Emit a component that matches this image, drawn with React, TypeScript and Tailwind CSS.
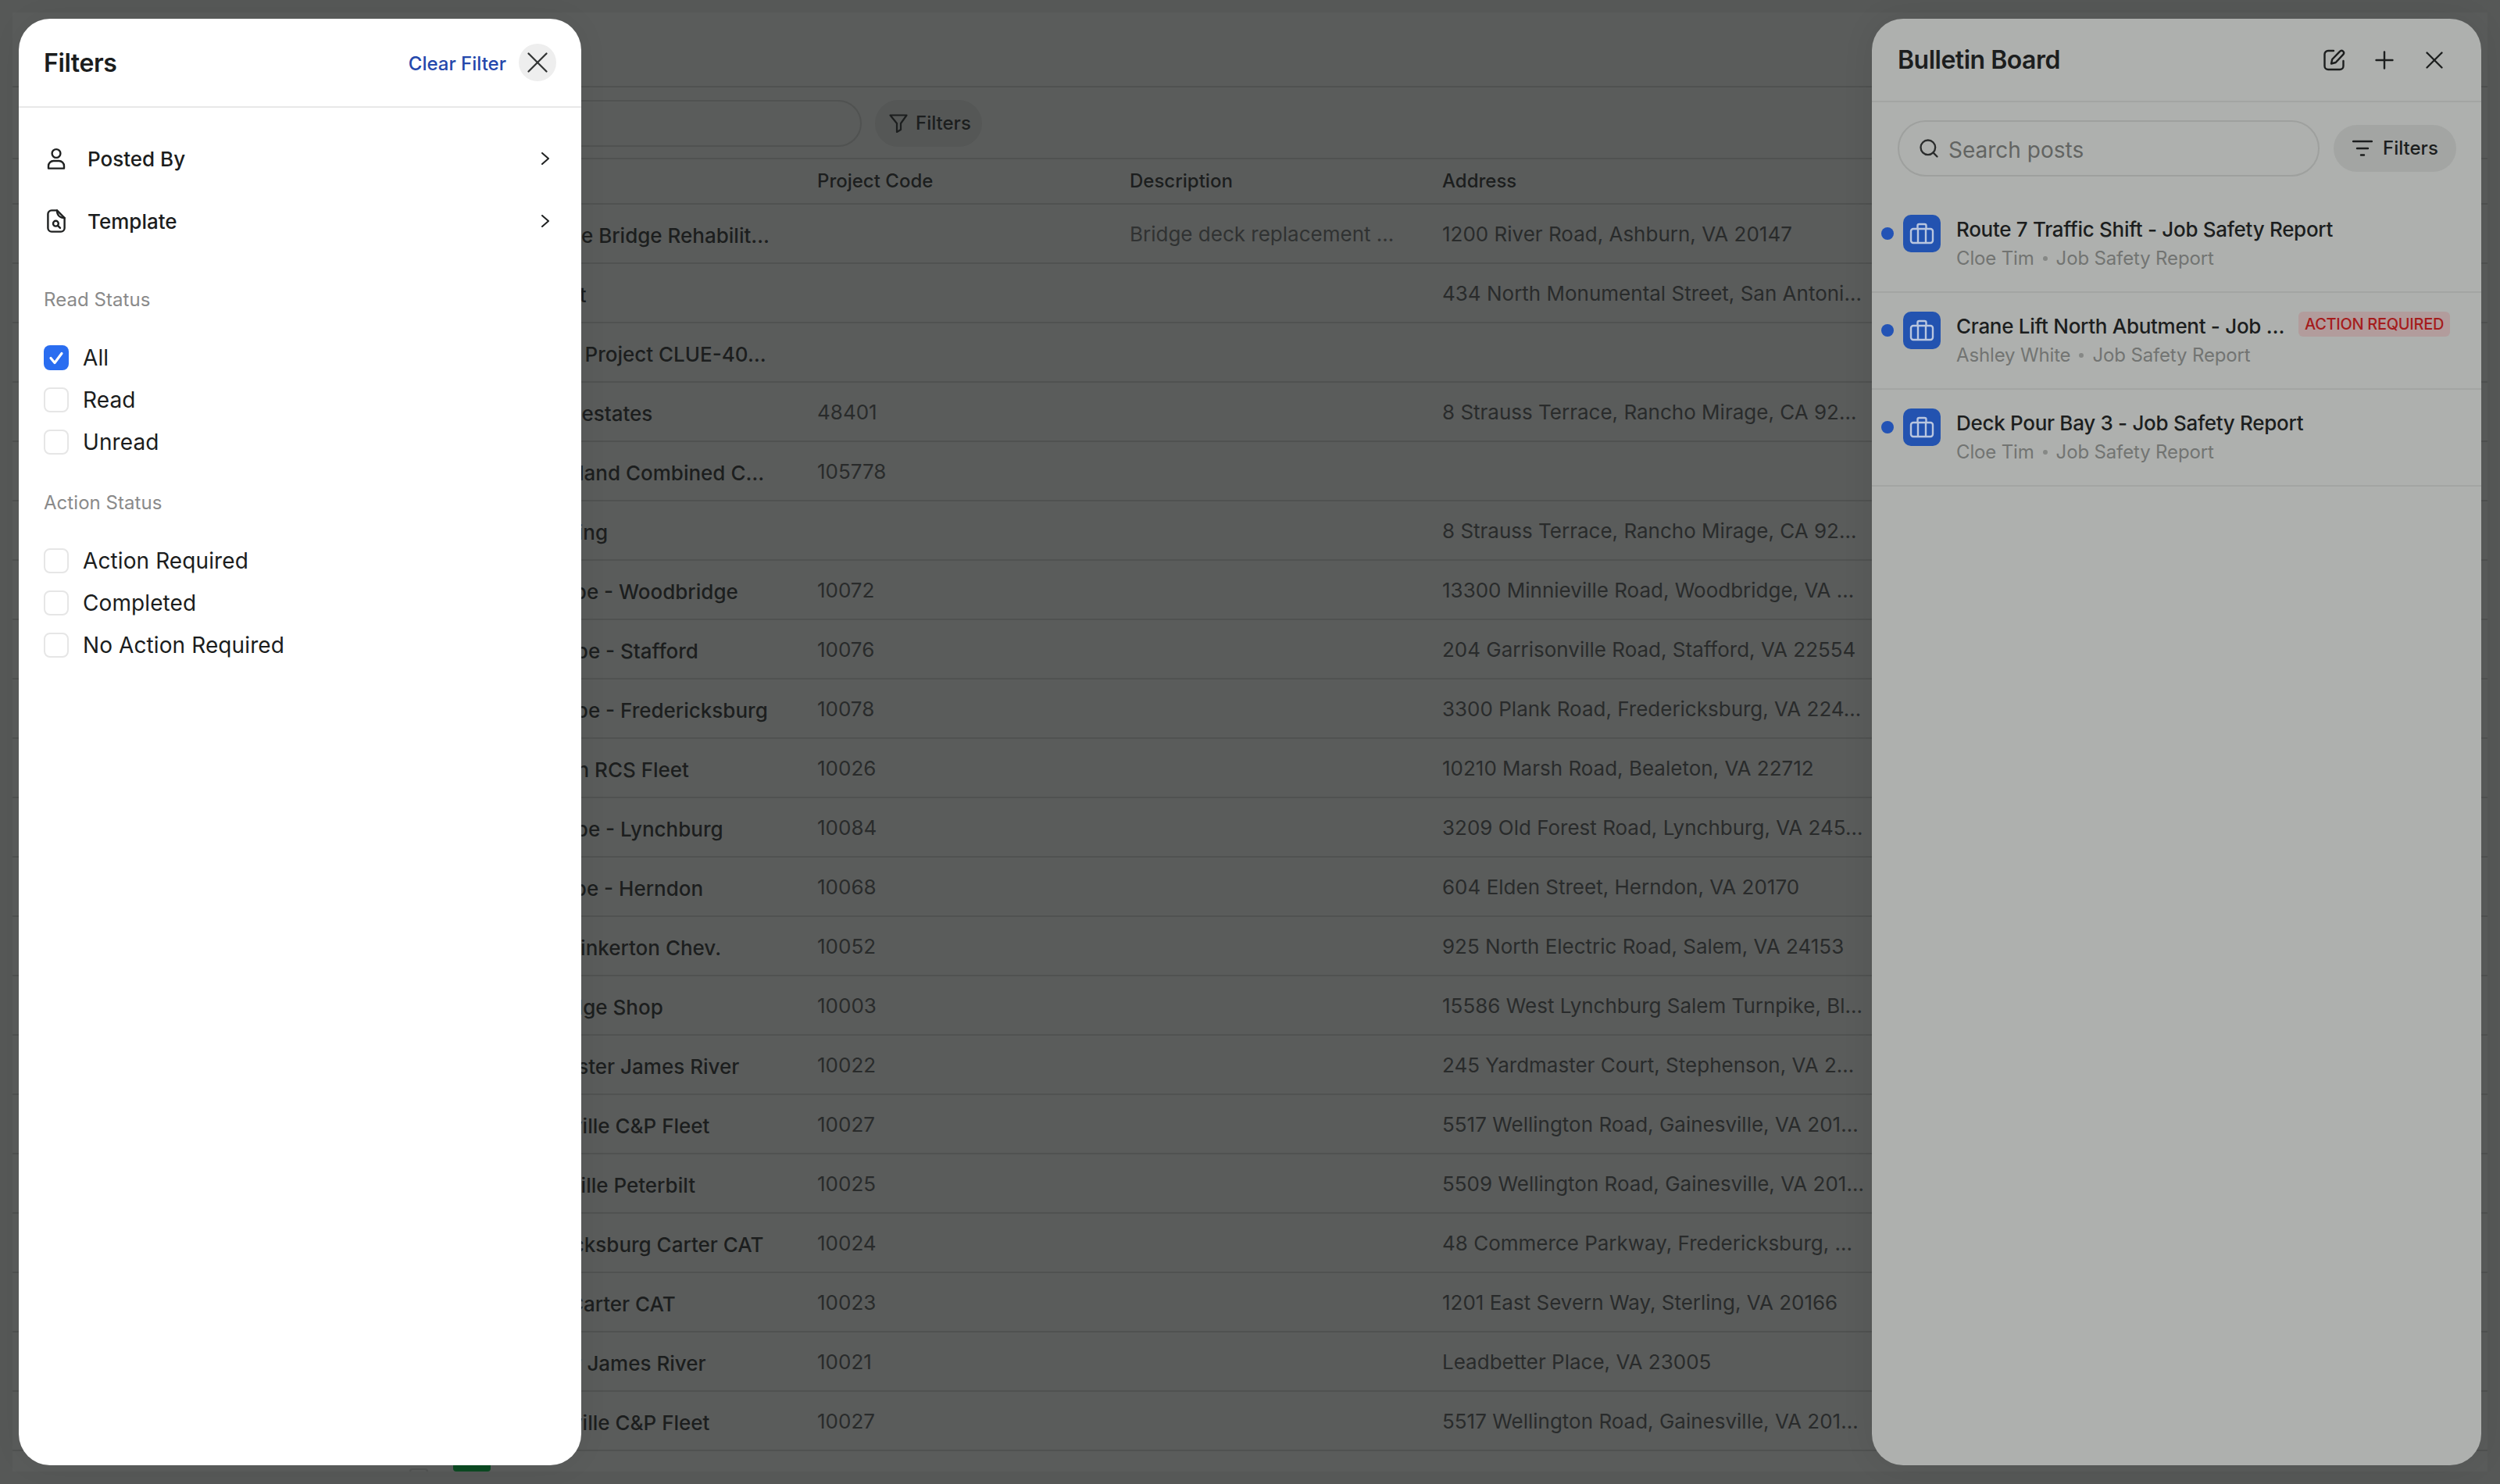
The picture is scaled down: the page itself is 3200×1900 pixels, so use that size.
import React from "react";
import { Search, Plus, X } from "lucide-react";

type Row = { name: string; nudge: string; code: string; desc: string; addr: string };

const rows: Row[] = [
  { name: "Rustic Lane Bridge Rehabilit…", nudge: "-ml-[30px]", code: "", desc: "Bridge deck replacement …", addr: "1200 River Road, Ashburn, VA 20147" },
  { name: "Test Project", nudge: "-ml-[42px]", code: "", desc: "", addr: "434 North Monumental Street, San Antoni…" },
  { name: "Sample Project CLUE-40…", nudge: "ml-[4px]", code: "", desc: "", addr: "" },
  { name: "Desert Ridge estates", nudge: "-ml-[68px]", code: "48401", desc: "", addr: "8 Strauss Terrace, Rancho Mirage, CA 92…" },
  { name: "Maryland Combined C…", nudge: "ml-[32px]", code: "105778", desc: "", addr: "" },
  { name: "Drilling", nudge: "ml-[46px]", code: "", desc: "", addr: "8 Strauss Terrace, Rancho Mirage, CA 92…" },
  { name: "Stoecker Pipe - Woodbridge", nudge: "-ml-[51px]", code: "10072", desc: "", addr: "13300 Minnieville Road, Woodbridge, VA …" },
  { name: "Stoecker Pipe - Stafford", nudge: "-ml-[49px]", code: "10076", desc: "", addr: "204 Garrisonville Road, Stafford, VA 22554" },
  { name: "Stoecker Pipe - Fredericksburg", nudge: "-ml-[49px]", code: "10078", desc: "", addr: "3300 Plank Road, Fredericksburg, VA 224…" },
  { name: "Bealeton RCS Fleet", nudge: "", code: "10026", desc: "", addr: "10210 Marsh Road, Bealeton, VA 22712" },
  { name: "Stoecker Pipe - Lynchburg", nudge: "-ml-[49px]", code: "10084", desc: "", addr: "3209 Old Forest Road, Lynchburg, VA 245…" },
  { name: "Stoecker Pipe - Herndon", nudge: "-ml-[51px]", code: "10068", desc: "", addr: "604 Elden Street, Herndon, VA 20170" },
  { name: "Salem Pinkerton Chev.", nudge: "-ml-[2px]", code: "10052", desc: "", addr: "925 North Electric Road, Salem, VA 24153" },
  { name: "Lynchridge Shop", nudge: "-ml-[6px]", code: "10003", desc: "", addr: "15586 West Lynchburg Salem Turnpike, Bl…" },
  { name: "Yardmaster James River", nudge: "", code: "10022", desc: "", addr: "245 Yardmaster Court, Stephenson, VA 2…" },
  { name: "Gainesville C&P Fleet", nudge: "", code: "10027", desc: "", addr: "5517 Wellington Road, Gainesville, VA 201…" },
  { name: "Gainesville Peterbilt", nudge: "-ml-[2px]", code: "10025", desc: "", addr: "5509 Wellington Road, Gainesville, VA 201…" },
  { name: "Fredericksburg Carter CAT", nudge: "", code: "10024", desc: "", addr: "48 Commerce Parkway, Fredericksburg, …" },
  { name: "Sterling Carter CAT", nudge: "-ml-[20px]", code: "10023", desc: "", addr: "1201 East Severn Way, Sterling, VA 20166" },
  { name: "Leadbetter James River", nudge: "-ml-[35px]", code: "10021", desc: "", addr: "Leadbetter Place, VA 23005" },
  { name: "Gainesville C&P Fleet", nudge: "", code: "10027", desc: "", addr: "5517 Wellington Road, Gainesville, VA 201…" },
];

const posts = [
  { title: "Route 7 Traffic Shift - Job Safety Report", who: "Cloe Tim", badge: false },
  { title: "Crane Lift North Abutment - Job …", who: "Ashley White", badge: true },
  { title: "Deck Pour Bay 3 - Job Safety Report", who: "Cloe Tim", badge: false },
];

function Chevron() {
  return (
    <svg width="12" height="16" viewBox="0 0 12 16" fill="none" stroke="#1f2121" strokeWidth="2" strokeLinecap="round" strokeLinejoin="round">
      <path d="M2 1l8 7-8 7" />
    </svg>
  );
}

function UserIcon() {
  return (
    <svg width="24" height="28" viewBox="0 0 24 28" fill="none" stroke="#1f2121" strokeWidth="2.4" strokeLinejoin="round">
      <circle cx="12" cy="7.5" r="5.4" />
      <path d="M2 26.6v-3a6.6 6.6 0 0 1 6.6-6.6h6.8a6.6 6.6 0 0 1 6.6 6.6v3z" />
    </svg>
  );
}

function TemplateIcon() {
  return (
    <svg width="24" height="30" viewBox="0 0 24 30" fill="none" stroke="#1f2121" strokeWidth="2.4" strokeLinecap="round" strokeLinejoin="round">
      <path d="M13 1.4H6a4.6 4.6 0 0 0-4.6 4.6v18a4.6 4.6 0 0 0 4.6 4.6h12a4.6 4.6 0 0 0 4.6-4.6V11z" />
      <path d="M13 1.4c0 6 3.5 9.6 9.6 9.6" />
      <circle cx="11.4" cy="18.2" r="3.4" />
      <path d="M14 20.8l3 3" />
    </svg>
  );
}

function Briefcase() {
  return (
    <svg width="48" height="48" viewBox="0 0 48 48" fill="none" stroke="#b9c6df" strokeWidth="2.4" strokeLinejoin="round">
      <rect x="10" y="18" width="28" height="18" rx="3" />
      <path d="M18.500 18v-4a2 2 0 0 1 2-2h7a2 2 0 0 1 2 2v4" />
      <path d="M19 18v18M29 18v18" />
    </svg>
  );
}

function Checkbox({ checked }: { checked?: boolean }) {
  return checked ? (
    <span className="flex h-[32px] w-[32px] items-center justify-center rounded-[8px] bg-[#2a6df0]">
      <svg width="20" height="20" viewBox="0 0 20 20" fill="none" stroke="#ffffff" strokeWidth="3.200" strokeLinecap="round" strokeLinejoin="round">
        <path d="M3 10.500l5 6 9-12" />
      </svg>
    </span>
  ) : (
    <span className="h-[32px] w-[32px] rounded-[8px] border-2 border-[#e6e6e6] bg-white" />
  );
}

function CheckRow({ label, checked }: { label: string; checked?: boolean }) {
  return (
    <div className="flex h-[54px] items-center gap-[18px]">
      <Checkbox checked={checked} />
      <span className="text-[28px] tracking-[0.1px] text-[#1b1d1d]">{label}</span>
    </div>
  );
}

function FiltersPanel() {
  return (
    <aside className="absolute left-[24px] top-[24px] z-10 flex h-[1852px] w-[720px] flex-col rounded-[40px] bg-white shadow-[0_0_40px_rgba(0,0,0,0.05)]">
      <div className="flex h-[114px] items-center justify-between border-b-2 border-[#e8e8e8] pl-[32px] pr-[32px]">
        <span className="pt-[2px] text-[32px] font-semibold tracking-[-0.4px] text-[#1b1d1d]">Filters</span>
        <div className="flex items-center gap-[16px]">
          <span className="pt-[4px] text-[24px] font-medium text-[#2448ac]">Clear Filter</span>
          <span className="flex h-[48px] w-[48px] items-center justify-center rounded-full bg-[#eeeeee]">
            <X size={46} strokeWidth={1.2} color="#333535" />
          </span>
        </div>
      </div>
      <div className="mt-[25px] flex h-[80px] items-center pl-[36px] pr-[40px]">
        <UserIcon />
        <span className="ml-[28px] flex-1 text-[26px] font-medium text-[#1b1d1d]">Posted By</span>
        <Chevron />
      </div>
      <div className="flex h-[80px] items-center pl-[36px] pr-[40px]">
        <TemplateIcon />
        <span className="ml-[28px] flex-1 text-[26px] font-medium text-[#1b1d1d]">Template</span>
        <Chevron />
      </div>
      <div className="flex flex-col pl-[32px]">
        <span className="mt-[45px] text-[24px] leading-[32px] tracking-[0.05px] text-[#8a8a8a]">Read Status</span>
        <div className="mt-[31px] flex flex-col">
          <CheckRow label="All" checked />
          <CheckRow label="Read" />
          <CheckRow label="Unread" />
        </div>
        <span className="mt-[35px] text-[24px] leading-[32px] tracking-[0.05px] text-[#8a8a8a]">Action Status</span>
        <div className="mt-[31px] flex flex-col">
          <CheckRow label="Action Required" />
          <CheckRow label="Completed" />
          <CheckRow label="No Action Required" />
        </div>
      </div>
    </aside>
  );
}

function BulletinPanel() {
  return (
    <aside className="absolute left-[2396px] top-[24px] z-10 flex h-[1852px] w-[780px] flex-col rounded-[40px] bg-[#aeb0ae] shadow-[0_0_40px_rgba(0,0,0,0.08)]">
      <div className="flex h-[107px] items-center justify-between border-b-2 border-[#a3a5a3] pl-[33px] pr-[28px]">
        <span className="text-[32px] font-semibold tracking-[-0.5px] text-[#1c1e1e]">Bulletin Board</span>
        <div className="flex items-center">
          <span className="flex w-[64px] justify-center">
            <svg width="28" height="28" viewBox="0 0 28 28" fill="none" stroke="#1c1e1e" strokeWidth="2.400" strokeLinecap="round" strokeLinejoin="round">
              <path d="M13 2H6a4.500 4.500 0 0 0-4.500 4.500v15A4.500 4.500 0 0 0 6 26h15a4.500 4.500 0 0 0 4.500-4.500V15" />
              <path d="M21 2.800a2.900 2.900 0 0 1 4.200 4l-9.500 10.200-5.700 1.500 1.200-5.500z" />
            </svg>
          </span>
          <span className="flex w-[64px] justify-center">
            <Plus size={36} strokeWidth={1.6} color="#1c1e1e" />
          </span>
          <span className="flex w-[64px] justify-center">
            <X size={38} strokeWidth={1.5} color="#1c1e1e" />
          </span>
        </div>
      </div>
      <div className="mt-[23px] flex items-center gap-[18px] pl-[33px]">
        <div className="flex h-[72px] w-[540px] items-center rounded-full border-2 border-[#9ea09e] pl-[24px]">
          <Search size={28} strokeWidth={2} color="#2a2c2c" />
          <span className="ml-[11px] pt-[4px] text-[28px] text-[#626462]">Search posts</span>
        </div>
        <div className="flex h-[60px] w-[157px] items-center rounded-full bg-[#a3a5a3] pl-[24px]">
          <svg width="26" height="22" viewBox="0 0 26 22" fill="none" stroke="#1c1e1e" strokeWidth="2.400" strokeLinecap="round">
            <path d="M1 2h24M6 11h14M11 19.500h4" />
          </svg>
          <span className="ml-[13px] text-[24px] font-medium text-[#1c1e1e]">Filters</span>
        </div>
      </div>
      <div className="mt-[25px] flex flex-col">
        {posts.map((p) => (
          <div key={p.title} className="flex h-[124px] border-b-2 border-[#a3a5a3] pl-[12px] pr-[40px] pt-[24px]">
            <span className="mt-[16px] h-[16px] w-[16px] shrink-0 rounded-full bg-[#2353b5]" />
            <span className="ml-[12px] h-[48px] w-[48px] shrink-0 rounded-[10px] bg-[#2353b0]">
              <Briefcase />
            </span>
            <div className="ml-[20px] flex min-w-0 flex-1 flex-col">
              <div className="flex items-start">
                <span className="whitespace-nowrap text-[26px] font-medium leading-[38px] tracking-[-0.3px] text-[#1c1e1e]">{p.title}</span>
                {p.badge && (
                  <span className="ml-[18px] flex h-[32px] shrink-0 items-center whitespace-nowrap rounded-[6px] bg-[#b29c9c] px-[8px] text-[20px] font-medium tracking-[-0.3px] text-[#a51c1c]">
                    ACTION REQUIRED
                  </span>
                )}
              </div>
              <div className="flex items-center text-[24px] leading-[36px] tracking-[-0.15px] text-[#727472]">
                <span>{p.who}</span>
                <span className="mx-[11px] h-[6px] w-[6px] rounded-full bg-[#868886]" />
                <span>Job Safety Report</span>
              </div>
            </div>
          </div>
        ))}
      </div>
    </aside>
  );
}

function Table() {
  return (
    <main className="mx-[16px] mt-[16px] flex h-[1868px] flex-col overflow-hidden bg-[#5a5c5b]">
      <div className="h-[96px] shrink-0 border-b-2 border-[#505251]" />
      <div className="flex h-[92px] shrink-0 items-center gap-[17px] border-b-2 border-[#505251] pl-[600px] pt-[2px]">
        <div className="h-[60px] w-[487px] rounded-full border-2 border-[#505251]" />
        <div className="flex h-[60px] w-[137px] items-center rounded-full bg-[#555756] pl-[18px]">
          <svg width="24" height="24" viewBox="0 0 24 24" fill="none" stroke="#1c1e1e" strokeWidth="2.200" strokeLinejoin="round">
            <path d="M1.500 1.500h21L15 12v8l-5 3V12z" />
          </svg>
          <span className="ml-[10px] text-[24px] font-medium text-[#1c1e1e]">Filters</span>
        </div>
      </div>
      <div className="grid h-[58px] shrink-0 grid-cols-[1030px_400px_400px_1fr] items-center border-b-2 border-[#505251] text-[24px] font-medium text-[#1c1e1e]">
        <span />
        <span>Project Code</span>
        <span>Description</span>
        <span>Address</span>
      </div>
      {rows.map((r, i) => (
        <div key={i} className="grid h-[76px] shrink-0 grid-cols-[629px_401px_400px_400px_1fr] items-center border-b-2 border-[#505251] text-[26px]">
          <span />
          <span className={`whitespace-nowrap pt-[5px] font-medium text-[#1c1e1e] ${r.nudge}`}>{r.name}</span>
          <span className="text-[#292b2b]">{r.code}</span>
          <span className="whitespace-nowrap text-[#303232]">{r.desc}</span>
          <span className="whitespace-nowrap text-[#292b2b]">{r.addr}</span>
        </div>
      ))}
      <div className="flex flex-1 items-end gap-[32px] pl-[508px]">
        <span className="h-[4px] w-[24px] rounded-t-[6px] border-2 border-b-0 border-[#505251]" />
        <span className="h-[24px] w-[48px] rounded-[4px] bg-[#0c4a22]" />
      </div>
    </main>
  );
}

export default function App() {
  return (
    <div className="relative h-[1900px] w-[3200px] overflow-hidden bg-[#565857] [font-family:Inter,sans-serif]">
      <Table />
      <FiltersPanel />
      <BulletinPanel />
    </div>
  );
}
